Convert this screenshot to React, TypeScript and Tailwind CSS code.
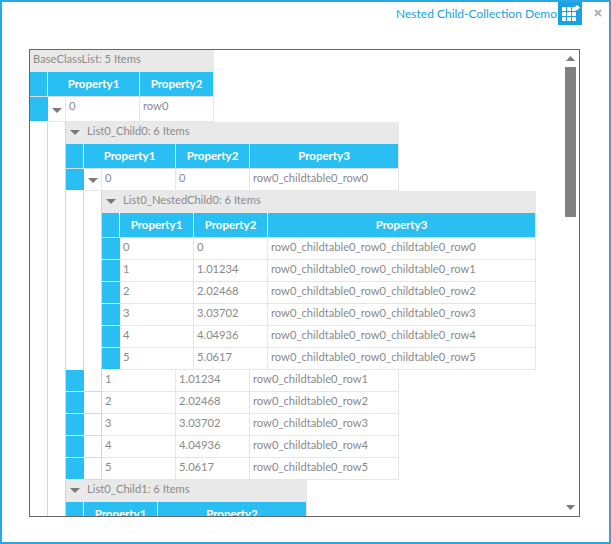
const LINE = "border-[#cfd9e6]";

function Arrow() {
  return (
    <svg width="10" height="5" viewBox="0 0 10 5" className="shrink-0">
      <path d="M0 0h10L5 5z" fill="#7a7a7a" />
    </svg>
  );
}

function Group({ label, arrow = true }: { label: string; arrow?: boolean }) {
  return (
    <div className="flex h-[22px] items-start bg-[#e9e9e9] text-[#8a8a8a]">
      {arrow ? (
        <span className="flex w-[21px] justify-start pl-[4px] pt-[8px]">
          <Arrow />
        </span>
      ) : (
        <span className="w-[3px]" />
      )}
      <span>{label}</span>
    </div>
  );
}

function HeaderRow({ cols }: { cols: { name: string; width: string }[] }) {
  return (
    <div className="flex h-[25px] bg-[#29bff3]">
      <div className="w-[18px] shrink-0 border-b border-r border-b-[#dcdcdc] border-r-white" />
      {cols.map((c) => (
        <div
          key={c.name}
          className={`${c.width} shrink-0 border-b border-r border-b-[#dcdcdc] border-r-[#e6e6e6] pt-[3px] text-center text-[11.5px] font-bold text-white`}
        >
          {c.name}
        </div>
      ))}
    </div>
  );
}

function Cell({ width, children }: { width: string; children: React.ReactNode }) {
  return (
    <div className={`${width} h-full shrink-0 border-b border-r border-[#e6e6e6] bg-white pl-[3px] text-[#8a8a8a]`}>
      {children}
    </div>
  );
}

function Blue() {
  return <div className="h-full w-[18px] shrink-0 border-b border-white bg-[#29bff3]" />;
}

function Expander() {
  return (
    <div className="flex h-full w-[18px] shrink-0 items-center justify-center border-b border-r border-[#e6e6e6] bg-white pt-[2px]">
      <Arrow />
    </div>
  );
}

function Spacer() {
  return <div className={`h-full w-[18px] shrink-0 border-b border-r ${LINE} bg-white`} />;
}

function Gutter({ children }: { children: React.ReactNode }) {
  return (
    <div className="flex">
      <div className={`w-[18px] shrink-0 border-r ${LINE}`} />
      <div className={`w-[18px] shrink-0 border-r ${LINE}`} />
      <div className="min-w-0 flex-1">{children}</div>
    </div>
  );
}

function NestedChild() {
  const rows = [
    ["0", "0"],
    ["1", "1.01234"],
    ["2", "2.02468"],
    ["3", "3.03702"],
    ["4", "4.04936"],
    ["5", "5.0617"],
  ];
  return (
    <div className="w-[434px]">
      <Group label="List0_NestedChild0: 6 Items" />
      <HeaderRow
        cols={[
          { name: "Property1", width: "w-[74px]" },
          { name: "Property2", width: "w-[74px]" },
          { name: "Property3", width: "w-[268px]" },
        ]}
      />
      {rows.map((r, i) => (
        <div key={r[0]} className="flex h-[22px]">
          <Blue />
          <Cell width="w-[74px]">{r[0]}</Cell>
          <Cell width="w-[74px]">{r[1]}</Cell>
          <Cell width="w-[268px]">{`row0_childtable0_row0_childtable0_row${i}`}</Cell>
        </div>
      ))}
    </div>
  );
}

function Child0() {
  const rows = [
    ["1", "1.01234"],
    ["2", "2.02468"],
    ["3", "3.03702"],
    ["4", "4.04936"],
    ["5", "5.0617"],
  ];
  return (
    <div className="w-[333px]">
      <Group label="List0_Child0: 6 Items" />
      <HeaderRow
        cols={[
          { name: "Property1", width: "w-[92px]" },
          { name: "Property2", width: "w-[74px]" },
          { name: "Property3", width: "w-[149px]" },
        ]}
      />
      <div className="flex h-[22px]">
        <Blue />
        <Expander />
        <Cell width="w-[74px]">0</Cell>
        <Cell width="w-[74px]">0</Cell>
        <Cell width="w-[149px]">row0_childtable0_row0</Cell>
      </div>
      <div className="flex w-[470px]">
        <div className={`w-[18px] shrink-0 border-r ${LINE}`} />
        <div className={`w-[18px] shrink-0 border-r ${LINE}`} />
        <NestedChild />
      </div>
      {rows.map((r, i) => (
        <div key={r[0]} className="flex h-[22px]">
          <Blue />
          <Spacer />
          <Cell width="w-[74px]">{r[0]}</Cell>
          <Cell width="w-[74px]">{r[1]}</Cell>
          <Cell width="w-[149px]">{`row0_childtable0_row${i + 1}`}</Cell>
        </div>
      ))}
    </div>
  );
}

function Child1() {
  return (
    <div className="w-[241px]">
      <Group label="List0_Child1: 6 Items" />
      <HeaderRow
        cols={[
          { name: "Property1", width: "w-[74px]" },
          { name: "Property2", width: "w-[149px]" },
        ]}
      />
    </div>
  );
}

export default function App() {
  return (
    <div className="flex h-[544px] w-[611px] flex-col overflow-hidden border-2 border-[#27a9e3] bg-white font-['Lato',sans-serif] text-[11.2px] leading-[18px]">
      <div className="flex h-[47px] items-start justify-end">
        <span className="mr-[1px] mt-[3px] text-[12px] text-[#1ba1e2]">Nested Child-Collection Demo</span>
        <div className="-mt-[2px] flex h-[25px] w-[24px] items-start justify-start bg-[#1ba1e2] pl-[4px] pt-[5px]">
          <svg width="18" height="17" viewBox="0 0 18 17">
            <path d="M0 2h4v4H0zM5 2h4v4H5zM10 2h4v4h-4zM0 7h4v4H0zM5 7h4v4H5zM10 7h4v4h-4zM0 12h4v4H0zM5 12h4v4H5zM10 12h4v4h-4z" fill="#fff" />
            <path d="M15 0l3 2.5-3 3-3-3z" fill="#fff" />
          </svg>
        </div>
        <svg width="8" height="8" viewBox="0 0 8 8" className="ml-[12px] mr-[7px] mt-[7px]">
          <path d="M1 1l6 6M7 1l-6 6" stroke="#b0b0b0" strokeWidth="2" />
        </svg>
      </div>
      <div className="ml-[27px] flex h-[468px] w-[551px] overflow-hidden border border-[#666]">
        <div className="min-w-0 flex-1 overflow-hidden">
          <div className="w-[184px]">
            <Group label="BaseClassList: 5 Items" arrow={false} />
            <HeaderRow
              cols={[
                { name: "Property1", width: "w-[92px]" },
                { name: "Property2", width: "w-[74px]" },
              ]}
            />
            <div className="flex h-[25px]">
              <Blue />
              <Expander />
              <Cell width="w-[74px]">0</Cell>
              <Cell width="w-[74px]">row0</Cell>
            </div>
          </div>
          <Gutter>
            <Child0 />
            <Child1 />
          </Gutter>
        </div>
        <div className="flex w-[16px] shrink-0 flex-col items-center pb-[6px] pr-[1px] pt-[6px]">
          <svg width="9" height="5" viewBox="0 0 9 5">
            <path d="M0 5h9L4.5 0z" fill="#7a7a7a" />
          </svg>
          <div className="mt-[6px] h-[150px] w-[11px] bg-[#808080]" />
          <div className="flex-1" />
          <svg width="9" height="5" viewBox="0 0 9 5">
            <path d="M0 0h9L4.5 5z" fill="#7a7a7a" />
          </svg>
        </div>
      </div>
    </div>
  );
}
